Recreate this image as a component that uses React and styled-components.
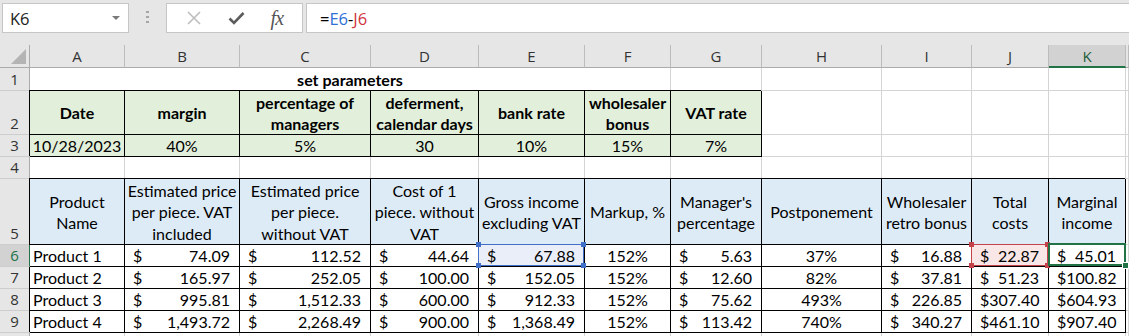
import React from 'react';
import styled, { createGlobalStyle, css } from 'styled-components';

const GlobalStyle = createGlobalStyle`
  html, body {
    margin: 0;
    padding: 0;
    overflow: hidden;
    background: #fff;
  }
  body {
    font-family: Lato, "Liberation Sans", sans-serif;
    color: #000;
  }
`;

const GREEN = '#217346';
const FILLS = { green: '#e2efda', blue: '#ddebf7' };

const Window = styled.div`
  width: 1129px;
  height: 336px;
  overflow: hidden;
`;

// ---- formula bar ----
const FormulaBar = styled.div`
  display: flex;
  align-items: flex-start;
  height: 45px;
  box-sizing: border-box;
  padding: 3px 0 0 2px;
  background: #e6e6e6;
  font-family: "Open Sans", "Noto Sans", sans-serif;
  font-size: 16.5px;
`;

const Box = styled.div`
  box-sizing: border-box;
  height: 30px;
  background: #fff;
  border: 1px solid #c6c6c6;
  display: flex;
  align-items: center;
`;

const NameBox = styled(Box)`
  width: 127px;
  padding: 0 8px 0 7px;
  justify-content: space-between;
  color: #222;
`;

const DropArrow = styled.span`
  width: 0;
  height: 0;
  border-left: 4px solid transparent;
  border-right: 4px solid transparent;
  border-top: 4px solid #7a7a7a;
`;

const Grip = styled.div`
  width: 37px;
  height: 30px;
  display: flex;
  flex-direction: column;
  align-items: center;
  gap: 3px;
  padding-top: 8px;
  box-sizing: border-box;
`;

const GripDot = styled.span`
  width: 3px;
  height: 2px;
  background: #a6a6a6;
`;

const ButtonBox = styled(Box)`
  width: 137px;
  justify-content: space-around;
  padding: 0 6px;
`;

const Fx = styled.span`
  font-family: "Liberation Serif", serif;
  font-style: italic;
  font-size: 20px;
  color: #555;
  letter-spacing: -1px;
`;

const FormulaBox = styled(Box)`
  flex: 1;
  margin-left: 3px;
  padding-left: 13px;
  border-right: none;
  color: #000;
`;

const Ref = styled.span`
  color: ${p => p.$color};
`;

// ---- sheet ----
const Sheet = styled.div`
  display: grid;
  grid-template-columns: 30px 95px 115px 131px 108px 106px 86px 91px 120px 90px 77px 77px 1fr;
  grid-template-rows: 23px 23px 44px 22px 22px 66px repeat(5, 22px);
  background: #fff;
`;

const Corner = styled.div`
  background: #e6e6e6;
  border-right: 1px solid #ababab;
  border-bottom: 1px solid #ababab;
  display: flex;
  align-items: flex-end;
  justify-content: flex-end;
  padding: 0 3px 3px 0;
  box-sizing: border-box;
`;

const CornerMark = styled.span`
  width: 15px;
  height: 15px;
  background: #b4b4b4;
  clip-path: polygon(100% 0, 100% 100%, 0 100%);
`;

const ColHead = styled.div`
  box-sizing: border-box;
  background: ${p => (p.$active ? '#d2d2d2' : '#e6e6e6')};
  border-right: 1px solid #bcbcbc;
  border-bottom: ${p => (p.$active ? `2px solid ${GREEN}` : '1px solid #ababab')};
  display: flex;
  align-items: center;
  justify-content: center;
  overflow: hidden;
  font-family: "Open Sans", "Noto Sans", sans-serif;
  font-size: 15px;
  color: ${p => (p.$active ? '#1e5e3a' : '#333')};
`;

const RowHead = styled.div`
  box-sizing: border-box;
  background: ${p => (p.$active ? '#d2d2d2' : '#e6e6e6')};
  border-right: 1px solid ${p => (p.$active ? GREEN : '#ababab')};
  border-bottom: 1px solid #cdcdcd;
  display: flex;
  align-items: flex-end;
  justify-content: center;
  padding-bottom: 1px;
  font-family: "Open Sans", "Noto Sans", sans-serif;
  font-size: 15px;
  color: ${p => (p.$active ? GREEN : '#333')};
  ${p => p.$active && css`position: relative;`}
`;

const Cell = styled.div`
  box-sizing: border-box;
  min-width: 0;
  grid-column: ${p => (p.$span ? `span ${p.$span}` : 'auto')};
  background: ${p => p.$tint || FILLS[p.$fill] || '#fff'};
  border-right: 1px solid ${p => (p.$boxed ? '#000' : '#d4d4d4')};
  border-bottom: 1px solid ${p => (p.$boxed ? '#000' : '#d4d4d4')};
  ${p => p.$boxed && css`box-shadow: -1px -1px 0 0 #000;`}
  ${p => p.$mark && css`position: relative;`}
  display: flex;
  align-items: center;
  justify-content: ${p =>
    p.$kind === 'money' ? 'space-between' : p.$kind === 'left' ? 'flex-start' : 'center'};
  padding: ${p => (p.$kind === 'money' ? '1px 9px 0 8px' : p.$kind === 'left' ? '1px 3px 0 3px' : '1px 0 0')};
  font-size: 16px;
  line-height: 21.5px;
  font-weight: ${p => (p.$bold ? 700 : 400)};
  text-align: center;
  white-space: nowrap;
  overflow: visible;
`;

const Line = styled.span`
  display: block;
`;

const RefFrame = styled.span`
  position: absolute;
  top: -1px;
  left: -1px;
  right: 0;
  bottom: 0;
  border: 1px solid ${p => p.$color};
  pointer-events: none;
`;

const Handle = styled.i`
  position: absolute;
  width: 5px;
  height: 5px;
  background: ${p => p.$color};
  ${p => (p.$x === 'l' ? 'left: -3px;' : 'right: -3px;')}
  ${p => (p.$y === 't' ? 'top: -3px;' : 'bottom: -3px;')}
`;

const ActiveFrame = styled.span`
  position: absolute;
  top: -2px;
  left: -1px;
  right: -1px;
  bottom: 0;
  border: 2px solid ${GREEN};
  pointer-events: none;
`;

const FillHandle = styled.i`
  position: absolute;
  right: -4px;
  bottom: -4px;
  width: 5px;
  height: 5px;
  background: ${GREEN};
  box-shadow: 0 0 0 1px #fff;
`;

// ---- data ----
// L is only a sliver at the right edge, so its letter isn't shown
const COLS = ['A', 'B', 'C', 'D', 'E', 'F', 'G', 'H', 'I', 'J', 'K', ''];

const PARAMS = [
  { label: ['Date'], value: '10/28/2023' },
  { label: ['margin'], value: '40%' },
  { label: ['percentage of', 'managers'], value: '5%' },
  { label: ['deferment,', 'calendar days'], value: '30' },
  { label: ['bank rate'], value: '10%' },
  { label: ['wholesaler', 'bonus'], value: '15%' },
  { label: ['VAT rate'], value: '7%' },
];

const HEADERS = [
  ['Product', 'Name'],
  ['Estimated price', 'per piece. VAT', 'included'],
  ['Estimated price', 'per piece.', 'without VAT'],
  ['Cost of 1', 'piece. without', 'VAT'],
  ['Gross income', 'excluding VAT'],
  ['Markup, %'],
  ["Manager's", 'percentage'],
  ['Postponement'],
  ['Wholesaler', 'retro bonus'],
  ['Total', 'costs'],
  ['Marginal', 'income'],
];

const KINDS = ['left', 'money', 'money', 'money', 'money', 'center', 'money', 'center', 'money', 'money', 'money'];

const PRODUCTS = [
  ['Product 1', '74.09', '112.52', '44.64', '67.88', '152%', '5.63', '37%', '16.88', '22.87', '45.01'],
  ['Product 2', '165.97', '252.05', '100.00', '152.05', '152%', '12.60', '82%', '37.81', '51.23', '100.82'],
  ['Product 3', '995.81', '1,512.33', '600.00', '912.33', '152%', '75.62', '493%', '226.85', '307.40', '604.93'],
  ['Product 4', '1,493.72', '2,268.49', '900.00', '1,368.49', '152%', '113.42', '740%', '340.27', '461.10', '907.40'],
];

// marks on row 6: E6 and J6 are formula refs, K6 is the active cell
const MARKS = {
  4: { type: 'ref', color: '#3f6fc6', tint: '#e9eef8' },
  9: { type: 'ref', color: '#c4424a', tint: '#f9e7e7' },
  10: { type: 'active' },
};

const Empty = ({ n }) => Array.from({ length: n }, (_, i) => <Cell key={`e${i}`} />);

const Lines = ({ lines }) => (
  <div>
    {lines.map(l => (
      <Line key={l}>{l}</Line>
    ))}
  </div>
);

const Mark = ({ mark }) => {
  if (mark.type === 'active') {
    return (
      <ActiveFrame>
        <FillHandle />
      </ActiveFrame>
    );
  }
  return (
    <RefFrame $color={mark.color}>
      <Handle $color={mark.color} $x="l" $y="t" />
      <Handle $color={mark.color} $x="r" $y="t" />
      <Handle $color={mark.color} $x="l" $y="b" />
      <Handle $color={mark.color} $x="r" $y="b" />
    </RefFrame>
  );
};

const ProductRow = ({ row, num, active }) => (
  <>
    <RowHead $active={active}>{num}</RowHead>
    {row.map((v, i) => {
      const kind = KINDS[i];
      const mark = active ? MARKS[i] : null;
      return (
        <Cell key={i} $boxed $kind={kind} $mark={!!mark} $tint={mark && mark.tint}>
          {kind === 'money' ? (
            <>
              <span>$</span>
              <span>{v}</span>
            </>
          ) : (
            v
          )}
          {mark && <Mark mark={mark} />}
        </Cell>
      );
    })}
    <Cell />
  </>
);

export default function App() {
  return (
    <Window>
      <GlobalStyle />
      <FormulaBar>
        <NameBox>
          <span>K6</span>
          <DropArrow />
        </NameBox>
        <Grip>
          <GripDot />
          <GripDot />
          <GripDot />
        </Grip>
        <ButtonBox>
          <svg width="16" height="16" viewBox="0 0 16 16">
            <path d="M2 2 L14 14 M14 2 L2 14" stroke="#bdbdbd" strokeWidth="1.6" fill="none" />
          </svg>
          <svg width="17" height="16" viewBox="0 0 17 16">
            <path d="M1.5 8.5 L6 13 L15.5 3" stroke="#5c5c5c" strokeWidth="2.6" fill="none" />
          </svg>
          <Fx>fx</Fx>
        </ButtonBox>
        <FormulaBox>
          =<Ref $color="#2f6fd6">E6</Ref>-<Ref $color="#d0343c">J6</Ref>
        </FormulaBox>
      </FormulaBar>

      <Sheet>
        <Corner>
          <CornerMark />
        </Corner>
        {COLS.map((c, i) => (
          <ColHead key={i} $active={c === 'K'}>
            {c}
          </ColHead>
        ))}

        <RowHead>1</RowHead>
        <Cell $span={6} $bold>
          set parameters
        </Cell>
        <Empty n={6} />

        <RowHead>2</RowHead>
        {PARAMS.map(p => (
          <Cell key={p.label[0]} $boxed $fill="green" $bold>
            <Lines lines={p.label} />
          </Cell>
        ))}
        <Empty n={5} />

        <RowHead>3</RowHead>
        {PARAMS.map(p => (
          <Cell key={p.label[0]} $boxed $fill="green">
            {p.value}
          </Cell>
        ))}
        <Empty n={5} />

        <RowHead>4</RowHead>
        <Empty n={12} />

        <RowHead>5</RowHead>
        {HEADERS.map(h => (
          <Cell key={h[0] + h.length} $boxed $fill="blue">
            <Lines lines={h} />
          </Cell>
        ))}
        <Cell />

        {PRODUCTS.map((row, i) => (
          <ProductRow key={row[0]} row={row} num={6 + i} active={i === 0} />
        ))}

        {/* row 10 only peeks in at the bottom edge */}
        <RowHead />
        <Empty n={12} />
      </Sheet>
    </Window>
  );
}
